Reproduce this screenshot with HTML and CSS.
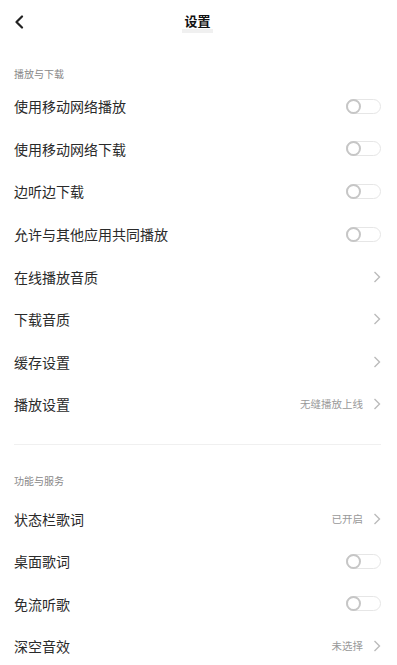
FILE: index.html
```html
<!DOCTYPE html>
<html lang="zh-CN">
<head>
<meta charset="utf-8">
<link rel="stylesheet" href="styles.css">
</head>
<body>
<div class="page">
  <header class="topbar">
    <svg class="back" width="10" height="14" viewBox="0 0 10 14"><polyline points="8,1.5 2.5,7 8,12.5" fill="none" stroke="#222" stroke-width="2.2" stroke-linecap="round" stroke-linejoin="round"/></svg>
    <h1 class="title">设置</h1>
  </header>

  <div class="section-title first">播放与下载</div>
  <div class="row"><span class="label">使用移动网络播放</span><span class="toggle"><span class="knob"></span></span></div>
  <div class="row"><span class="label">使用移动网络下载</span><span class="toggle"><span class="knob"></span></span></div>
  <div class="row"><span class="label">边听边下载</span><span class="toggle"><span class="knob"></span></span></div>
  <div class="row"><span class="label">允许与其他应用共同播放</span><span class="toggle"><span class="knob"></span></span></div>
  <div class="row"><span class="label">在线播放音质</span><span class="right"><svg class="chev" width="8" height="12" viewBox="0 0 8 12"><polyline points="1.5,1 6.5,6 1.5,11" fill="none" stroke="#bbb" stroke-width="1.4"/></svg></span></div>
  <div class="row"><span class="label">下载音质</span><span class="right"><svg class="chev" width="8" height="12" viewBox="0 0 8 12"><polyline points="1.5,1 6.5,6 1.5,11" fill="none" stroke="#bbb" stroke-width="1.4"/></svg></span></div>
  <div class="row"><span class="label">缓存设置</span><span class="right"><svg class="chev" width="8" height="12" viewBox="0 0 8 12"><polyline points="1.5,1 6.5,6 1.5,11" fill="none" stroke="#bbb" stroke-width="1.4"/></svg></span></div>
  <div class="row"><span class="label">播放设置</span><span class="right"><span class="value">无缝播放上线</span><svg class="chev" width="8" height="12" viewBox="0 0 8 12"><polyline points="1.5,1 6.5,6 1.5,11" fill="none" stroke="#bbb" stroke-width="1.4"/></svg></span></div>

  <div class="divider"></div>

  <div class="section-title second">功能与服务</div>
  <div class="row"><span class="label">状态栏歌词</span><span class="right"><span class="value">已开启</span><svg class="chev" width="8" height="12" viewBox="0 0 8 12"><polyline points="1.5,1 6.5,6 1.5,11" fill="none" stroke="#bbb" stroke-width="1.4"/></svg></span></div>
  <div class="row"><span class="label">桌面歌词</span><span class="toggle"><span class="knob"></span></span></div>
  <div class="row"><span class="label">免流听歌</span><span class="toggle"><span class="knob"></span></span></div>
  <div class="row"><span class="label">深空音效</span><span class="right"><span class="value">未选择</span><svg class="chev" width="8" height="12" viewBox="0 0 8 12"><polyline points="1.5,1 6.5,6 1.5,11" fill="none" stroke="#bbb" stroke-width="1.4"/></svg></span></div>
</div>
</body>
</html>
```

FILE: styles.css
```css
html, body {
  margin: 0;
  padding: 0;
  background: #fff;
}
body {
  font-family: "Noto Sans CJK SC", "Noto Sans", sans-serif;
  color: #222;
  overflow: hidden;
}
.page {
  width: 397px;
  height: 665px;
  padding: 0 16px 0 14px;
  box-sizing: border-box;
}
.topbar {
  height: 42px;
  display: flex;
  align-items: center;
  justify-content: center;
  position: relative;
}
.back {
  position: absolute;
  left: 0;
  top: 15px;
}
.title {
  margin: 0;
  font-size: 13px;
  font-weight: 700;
  line-height: 16px;
  padding: 0 2px 4px;
  margin-top: 4px;
  color: #111;
  background: linear-gradient(to bottom, transparent 0, transparent 16px, #f0f0f0 16px, #f0f0f0 100%);
}
.section-title {
  font-size: 10px;
  line-height: 14px;
  color: #888;
}
.section-title.first {
  padding-top: 25px;
  padding-bottom: 4px;
}
.section-title.second {
  padding-top: 29.5px;
  padding-bottom: 9px;
}
.row {
  height: 42.6px;
  display: flex;
  align-items: center;
  justify-content: space-between;
}
.label {
  font-size: 14px;
  line-height: 16px;
  color: #2a2a2a;
}
.right {
  display: flex;
  align-items: center;
  gap: 10px;
}
.value {
  font-size: 10.5px;
  color: #999;
  line-height: 14px;
}
.chev {
  display: block;
}
.toggle {
  width: 35px;
  height: 15px;
  box-sizing: border-box;
  border: 1px solid #e6e6e6;
  border-radius: 8px;
  display: flex;
  align-items: center;
}
.knob {
  width: 15px;
  height: 15px;
  box-sizing: border-box;
  border: 2px solid #c6c6c6;
  border-radius: 50%;
  background: #fff;
  margin-left: -1px;
}
.divider {
  margin-top: 18px;
  height: 1px;
  background: #f0f0f0;
}
```
